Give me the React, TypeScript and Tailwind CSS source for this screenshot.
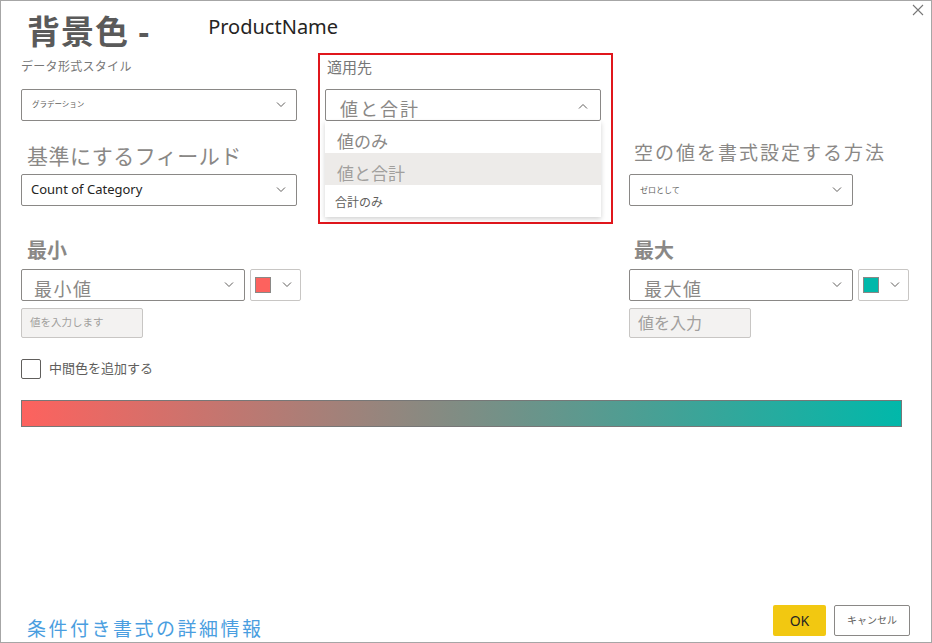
import React from "react"

const Chevron = ({ up = false }: { up?: boolean }) => (
  <svg width="10" height="6" viewBox="0 0 10 6" className="shrink-0">
    <path d={up ? "M1 5.5l4-4 4 4" : "M1 .5l4 4 4-4"} fill="none" stroke="#605e5c" strokeWidth="1" />
  </svg>
)

const ColorPicker = ({ color }: { color: string }) => (
  <div className="ml-[5px] flex h-[32px] w-[51px] items-center rounded-[2px] border border-[#c8c6c4] pl-[4px] pr-[8px]">
    <div className="h-[16px] w-[16px] border border-[#8a8886]" style={{ background: color }} />
    <div className="flex-1" />
    <Chevron />
  </div>
)

export default function App() {
  return (
    <div className="relative flex h-[643px] w-[932px] flex-col overflow-hidden border border-[#a6a6a6] bg-white font-['Noto_Sans','Noto_Sans_CJK_JP',sans-serif] text-[#252423]">
      {/* close */}
      <button className="absolute right-[6px] top-[2px] p-[1px]">
        <svg width="12" height="12" viewBox="0 0 12 12">
          <path d="M1 1l10 10M11 1L1 11" stroke="#777" strokeWidth="1.1" />
        </svg>
      </button>

      {/* title */}
      <div className="flex h-[52px] items-start pl-[26px] pt-[12px]">
        <span className="text-[33px] font-bold leading-[37px] tracking-[1px] text-[#5a5a5a]">背景色 -</span>
        <span className="ml-[58px] mt-[2px] text-[20px] leading-[24px] text-[#252423]">ProductName</span>
      </div>

      {/* top section */}
      <div className="flex pl-[20px]">
        <div className="flex w-[276px] flex-col">
          <div className="mt-[6px] text-[12px] leading-[16px] tracking-[0.3px] text-[#777]">データ形式スタイル</div>
          <div className="mt-[14px] flex h-[32px] items-center rounded-[2px] border border-[#8a8886] pl-[10px] pr-[10px]">
            <span className="flex-1 text-[7.5px] text-[#605e5c]">グラデーション</span>
            <Chevron />
          </div>
          <div className="mt-[21px] pl-[6px] text-[21px] leading-[28px] tracking-[0.5px] text-[#8a8886]">基準にするフィールド</div>
          <div className="mt-[4px] flex h-[32px] items-center rounded-[2px] border border-[#8a8886] pl-[9px] pr-[10px]">
            <span className="flex-1 text-[13px] text-[#252423]">Count of Category</span>
            <Chevron />
          </div>
        </div>

        {/* apply to - highlighted */}
        <div className="ml-[21px] flex h-[171px] w-[295px] flex-col border-2 border-[#e0161c] pl-[5px]">
          <div className="mt-[2px] pl-[2px] text-[15px] leading-[20px] text-[#777]">適用先</div>
          <div className="mt-[12px] flex h-[32px] w-[276px] overflow-hidden rounded-[2px] border border-[#8a8886] pl-[14px] pr-[12px]">
            <span className="flex-1 pt-[8px] text-[18px] leading-[22px] tracking-[2px] text-[#8a8886]">値と合計</span>
            <div className="flex items-center pt-[1px]">
              <Chevron up />
            </div>
          </div>
          <div className="w-[276px] bg-white shadow-[0_2px_5px_rgba(0,0,0,0.18)]">
            <div className="flex h-[32px] items-end pl-[12px] text-[17px] leading-[22px] text-[#8a8886]">値のみ</div>
            <div className="flex h-[32px] items-end bg-[#edebe9] pl-[12px] text-[17px] leading-[22px] text-[#a19f9d]">値と合計</div>
            <div className="flex h-[32px] items-center pl-[10px] pt-[4px] text-[12px] text-[#605e5c]">合計のみ</div>
          </div>
        </div>

        <div className="ml-[16px] flex w-[280px] flex-col">
          <div className="mt-[88px] pl-[5px] text-[19px] leading-[24px] tracking-[2px] text-[#8a8886]">空の値を書式設定する方法</div>
          <div className="mt-[9px] flex h-[32px] w-[224px] items-center rounded-[2px] border border-[#8a8886] pl-[10px] pr-[10px]">
            <span className="flex-1 text-[8px] text-[#605e5c]">ゼロとして</span>
            <Chevron />
          </div>
        </div>
      </div>

      {/* min / max */}
      <div className="flex pl-[20px]">
        <div className="flex w-[280px] flex-col">
          <div className="mt-[15px] pl-[6px] text-[20px] font-bold leading-[24px] text-[#8a8886]">最小</div>
          <div className="mt-[6px] flex">
            <div className="flex h-[32px] w-[224px] overflow-hidden rounded-[2px] border border-[#8a8886] pl-[12px] pr-[10px]">
              <span className="flex-1 pt-[8px] text-[18px] leading-[22px] tracking-[1.5px] text-[#8a8886]">最小値</span>
              <div className="flex items-center">
                <Chevron />
              </div>
            </div>
            <ColorPicker color="#fd625e" />
          </div>
          <div className="mt-[7px] flex h-[30px] w-[122px] items-center rounded-[2px] border border-[#c8c6c4] bg-[#f3f2f1] pl-[8px] text-[10.5px] text-[#a19f9d]">
            値を入力します
          </div>
        </div>

        <div className="ml-[328px] flex w-[280px] flex-col">
          <div className="mt-[15px] pl-[5px] text-[20px] font-bold leading-[24px] text-[#8a8886]">最大</div>
          <div className="mt-[6px] flex">
            <div className="flex h-[32px] w-[224px] overflow-hidden rounded-[2px] border border-[#8a8886] pl-[14px] pr-[10px]">
              <span className="flex-1 pt-[8px] text-[18px] leading-[22px] tracking-[1.5px] text-[#8a8886]">最大値</span>
              <div className="flex items-center">
                <Chevron />
              </div>
            </div>
            <ColorPicker color="#01b8aa" />
          </div>
          <div className="mt-[7px] flex h-[30px] w-[122px] items-center rounded-[2px] border border-[#c8c6c4] bg-[#f3f2f1] pl-[8px] text-[16px] text-[#a19f9d]">
            値を入力
          </div>
        </div>
      </div>

      {/* middle color */}
      <div className="mt-[21px] flex items-center pl-[20px]">
        <div className="h-[20px] w-[20px] rounded-[2px] border border-[#605e5c]" />
        <span className="ml-[8px] text-[13px] text-[#605e5c]">中間色を追加する</span>
      </div>

      {/* gradient */}
      <div className="ml-[20px] mt-[21px] h-[27px] w-[881px] border border-[#777] bg-[linear-gradient(to_right,#fd625e,#01b8aa)]" />

      <div className="flex-1" />

      {/* footer */}
      <div className="flex items-end justify-between pb-[1px] pl-[26px] pr-[21px]">
        <a className="text-[19px] leading-[24px] tracking-[2.5px] text-[#4a9ee0]">条件付き書式の詳細情報</a>
        <div className="mb-[5px] flex gap-[8px]">
          <button className="h-[31px] w-[53px] rounded-[2px] bg-[#f2c811] text-[14px] text-[#252423]">OK</button>
          <button className="h-[31px] w-[76px] rounded-[2px] border border-[#8a8886] bg-white text-[10px] text-[#605e5c]">キャンセル</button>
        </div>
      </div>
    </div>
  )
}
